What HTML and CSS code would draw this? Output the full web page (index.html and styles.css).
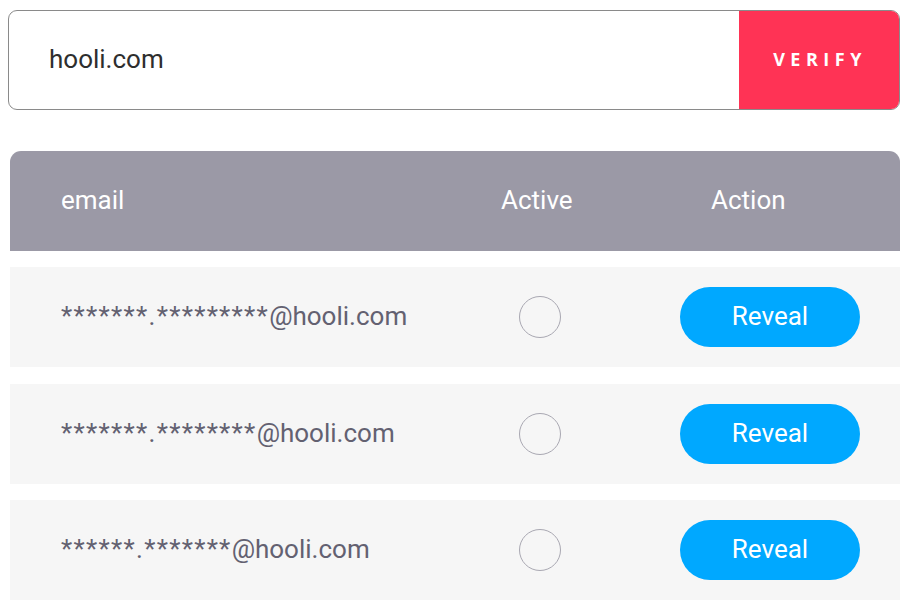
FILE: index.html
```html
<!DOCTYPE html>
<html>
<head>
<meta charset="utf-8">
<link rel="stylesheet" href="styles.css">
</head>
<body>
<div class="page">
  <form class="search">
    <div class="search-input">hooli.com</div>
    <button type="button" class="verify">VERIFY</button>
  </form>
  <div class="table">
    <div class="thead">
      <div class="th th-email">email</div>
      <div class="th th-active">Active</div>
      <div class="th th-action">Action</div>
    </div>
    <div class="rows">
      <div class="row">
        <div class="cell-email"><span class="mask">*******.*********</span>@hooli.com</div>
        <div class="cell-active"><span class="radio"></span></div>
        <div class="cell-action"><button type="button" class="reveal">Reveal</button></div>
      </div>
      <div class="row">
        <div class="cell-email"><span class="mask">*******.********</span>@hooli.com</div>
        <div class="cell-active"><span class="radio"></span></div>
        <div class="cell-action"><button type="button" class="reveal">Reveal</button></div>
      </div>
      <div class="row">
        <div class="cell-email"><span class="mask">******.*******</span>@hooli.com</div>
        <div class="cell-active"><span class="radio"></span></div>
        <div class="cell-action"><button type="button" class="reveal">Reveal</button></div>
      </div>
    </div>
  </div>
</div>
</body>
</html>
```
FILE: styles.css
```css
html, body {
  margin: 0;
  padding: 0;
  background: #ffffff;
}
body {
  font-family: Roboto, "Liberation Sans", sans-serif;
}
.page {
  padding: 10px 10px 0 8px;
  display: flex;
  flex-direction: column;
}
.search {
  margin: 0;
  display: flex;
  height: 100px;
  box-sizing: border-box;
  border: 1px solid #8a8a8a;
  border-radius: 9px;
  overflow: hidden;
}
.search-input {
  flex: 1;
  display: flex;
  align-items: center;
  padding-left: 40px;
  padding-bottom: 2px;
  font-size: 26px;
  color: #2e2e2e;
}
.verify {
  width: 160px;
  border: none;
  margin: 0;
  background: #ff3355;
  color: #ffffff;
  font-family: "Open Sans", "Liberation Sans", sans-serif;
  font-weight: 700;
  font-size: 18px;
  letter-spacing: 5.5px;
  padding: 0 0 2px 2px;
}
.table {
  margin-top: 41px;
  margin-left: 2px;
  display: flex;
  flex-direction: column;
  gap: 16px;
}
.thead {
  height: 100px;
  background: #9b99a6;
  border-radius: 11px 11px 0 0;
  display: grid;
  grid-template-columns: 440px 210px 1fr;
  align-items: center;
  padding-left: 51px;
  padding-bottom: 2px;
  box-sizing: border-box;
  color: #ffffff;
  font-size: 26px;
}
.rows {
  display: flex;
  flex-direction: column;
  gap: 16.5px;
}
.row {
  height: 100px;
  background: #f6f6f6;
  display: grid;
  grid-template-columns: 440px 179px 180px;
  align-items: center;
  padding-left: 51px;
}
.cell-email {
  font-size: 26px;
  color: #636171;
  padding-bottom: 2px;
}
.mask {
  letter-spacing: 1.3px;
}
.cell-active {
  display: flex;
}
.radio {
  margin-left: 18px;
  width: 40px;
  height: 40px;
  border: 1px solid #a9a8b2;
  border-radius: 50%;
  background: #f6f6f6;
}
.reveal {
  width: 180px;
  height: 60px;
  border: none;
  border-radius: 30px;
  background: #00a8ff;
  color: #ffffff;
  font-family: Roboto, "Liberation Sans", sans-serif;
  font-size: 26px;
  padding: 0 0 2px 0;
}
```
